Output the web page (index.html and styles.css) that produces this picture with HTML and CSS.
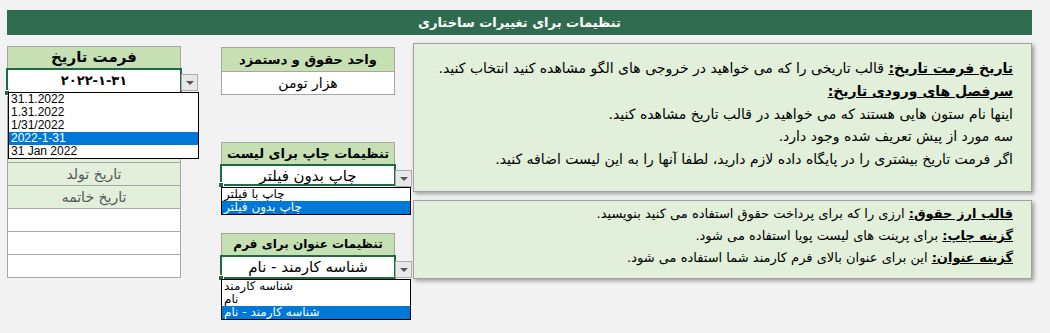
FILE: index.html
```html
<!DOCTYPE html>
<html lang="fa">
  <head>
    <meta charset="utf-8">
    <title>تنظیمات برای تغییرات ساختاری</title>
    <link rel="stylesheet" href="styles.css">
  </head>
  <body>
    <div class="titleBar">تنظیمات برای تغییرات ساختاری</div>

    <div class="sheet">

      <!-- date format column -->
      <div class="dateCol">
        <div class="head dateHead">فرمت تاریخ</div>
        <div class="cell pickCell dateValue">
          <span class="ltr">۲۰۲۲-۱-۳۱</span>
          <span class="arrowBtn"></span>
          <span class="fillHandle"></span>
          <div class="dropList dateList">
            <div class="item">31.1.2022</div>
            <div class="item">1.31.2022</div>
            <div class="item">1/31/2022</div>
            <div class="item selected">2022-1-31</div>
            <div class="item">31 Jan 2022</div>
          </div>
        </div>
        <div class="cell soft"></div>
        <div class="cell soft"></div>
        <div class="cell soft"></div>
        <div class="cell soft greyText">تاریخ تولد</div>
        <div class="cell soft greyText">تاریخ خاتمه</div>
        <div class="cell"></div>
        <div class="cell"></div>
        <div class="cell"></div>
      </div>

      <!-- settings column -->
      <div class="setCol">
        <div class="group">
          <div class="head tallHead">واحد حقوق و دستمزد</div>
          <div class="cell">هزار تومن</div>
        </div>

        <div class="group">
          <div class="head">تنظیمات چاپ برای لیست</div>
          <div class="cell pickCell printCell">
            چاپ بدون فیلتر
            <span class="arrowBtn"></span>
            <span class="fillHandle"></span>
            <div class="dropList printList">
              <div class="item">چاپ با فیلتر</div>
              <div class="item selected">چاپ بدون فیلتر</div>
            </div>
          </div>
        </div>

        <div class="group">
          <div class="head formHead">تنظیمات عنوان برای فرم</div>
          <div class="cell pickCell formCell">
            شناسه کارمند - نام
            <span class="arrowBtn"></span>
            <span class="fillHandle"></span>
            <div class="dropList formList">
              <div class="item">شناسه کارمند</div>
              <div class="item">نام</div>
              <div class="item selected">شناسه کارمند - نام</div>
            </div>
          </div>
        </div>
      </div>

      <!-- help notes -->
      <div class="noteCol">
        <div class="note noteTop">
          <p><span class="label">تاریخ فرمت تاریخ:</span> قالب تاریخی را که می خواهید در خروجی های الگو مشاهده کنید انتخاب کنید.</p>
          <p><span class="label">سرفصل های ورودی تاریخ:</span></p>
          <p>اینها نام ستون هایی هستند که می خواهید در قالب تاریخ مشاهده کنید.</p>
          <p>سه مورد از پیش تعریف شده وجود دارد.</p>
          <p>اگر فرمت تاریخ بیشتری را در پایگاه داده لازم دارید، لطفا آنها را به این لیست اضافه کنید.</p>
        </div>
        <div class="note noteBottom">
          <p><span class="label">قالب ارز حقوق:</span> ارزی را که برای پرداخت حقوق استفاده می کنید بنویسید.</p>
          <p><span class="label"> گزینه چاپ:</span> برای پرینت های لیست پویا استفاده می شود.</p>
          <p><span class="label">گزینه عنوان:</span> این برای عنوان بالای فرم کارمند شما استفاده می شود.</p>
        </div>
      </div>

    </div>
  </body>
</html>
```

FILE: styles.css
```css
body {
  margin: 0;
  min-height: 333px;
  background-color: #f2f2f2;
  font-family: "DejaVu Sans", sans-serif;
  direction: rtl;
  color: #000;
}

.titleBar {
  width: 1025px;
  height: 25px;
  margin: 10px 18px 0 7px;
  background-color: #2e6b4f;
  color: white;
  font-weight: bold;
  font-size: 13px;
  line-height: 25px;
  text-align: center;
}

.sheet {
  display: flex;
  direction: ltr;
  align-items: flex-start;
  margin-top: 8px;
  padding-left: 7px;
  padding-bottom: 60px;
}

/* left column with the date format */
.dateCol {
  width: 174px;
  margin-top: 3px;
  display: flex;
  flex-direction: column;
  direction: rtl;
}

.setCol {
  width: 174px;
  margin-left: 40px;
  margin-top: 4px;
  direction: rtl;
}

.group {
  display: flex;
  flex-direction: column;
}

.group + .group {
  margin-top: 47px;
}

.head, .cell {
  box-sizing: border-box;
  height: 24px;
  border: 1px solid #a6a6a6;
  margin-top: -1px;
  text-align: center;
  font-size: 14px;
  line-height: 22px;
  white-space: nowrap;
  position: relative;
}

.head {
  margin-top: 0;
  height: 23px;
  background-color: #c6e0b4;
  font-weight: bold;
  font-size: 13px;
  line-height: 21px;
}

.dateHead {
  font-size: 15px;
}

.formHead {
  font-size: 12px;
}

.tallHead {
  height: 25px;
  line-height: 23px;
}

.cell {
  background-color: white;
}

.soft {
  background-color: #e2efda;
}

.greyText {
  color: #555;
}

.pickCell {
  border: 2px solid #1f6b42;
  margin-left: -1px;
  margin-right: -1px;
  font-size: 15px;
  line-height: 20px;
  z-index: 2;
}

.dateValue {
  height: 26px;
  font-weight: bold;
  font-size: 13px;
  line-height: 22px;
}

.printCell {
  height: 22px;
}

.formCell {
  height: 24px;
}

.ltr {
  direction: ltr;
  unicode-bidi: embed;
}

.fillHandle {
  position: absolute;
  left: -4px;
  bottom: -4px;
  width: 4px;
  height: 4px;
  background-color: #1f6b42;
  border: 1px solid white;
}

.arrowBtn {
  position: absolute;
  right: -18px;
  top: 4px;
  width: 15px;
  height: 15px;
  background-color: #e8e8e8;
  border: 1px solid #ababab;
}

.arrowBtn::after {
  content: "";
  position: absolute;
  left: 4px;
  top: 6px;
  border-left: 4px solid transparent;
  border-right: 4px solid transparent;
  border-top: 4px solid #555;
}

/* open dropdown menus */
.dropList {
  position: absolute;
  box-sizing: border-box;
  background-color: white;
  border: 1px solid #000;
  text-align: left;
  font-weight: normal;
  font-size: 12px;
  line-height: 13px;
  z-index: 5;
}

.dateList {
  left: 0;
  top: 22px;
  width: 191px;
  height: 67px;
  font-family: "Liberation Sans", sans-serif;
  direction: ltr;
}

.printList {
  left: -1px;
  top: 21px;
  width: 190px;
  height: 28px;
}

.formList {
  left: -1px;
  top: 22px;
  width: 190px;
  height: 41px;
}

.item {
  height: 13px;
  line-height: 13px;
  padding: 0 2px;
}

.selected {
  background-color: #0078d7;
  color: white;
}

/* notes on the right */
.noteCol {
  width: 619px;
  margin-left: 18px;
  direction: rtl;
}

.note {
  box-sizing: border-box;
  background-color: #e2efda;
  border: 1px solid #a0a0a0;
  box-shadow: 2px 2px 4px rgba(0, 0, 0, 0.35);
  font-size: 14px;
  padding-right: 18px;
}

.note p {
  margin: 0;
  white-space: nowrap;
}

.noteTop {
  height: 149px;
  padding-top: 13px;
  line-height: 22.8px;
}

.noteBottom {
  height: 79px;
  margin-top: 8px;
  padding-top: 2px;
  font-size: 13px;
  line-height: 22px;
}

.label {
  font-weight: bold;
  text-decoration: underline;
}
```
